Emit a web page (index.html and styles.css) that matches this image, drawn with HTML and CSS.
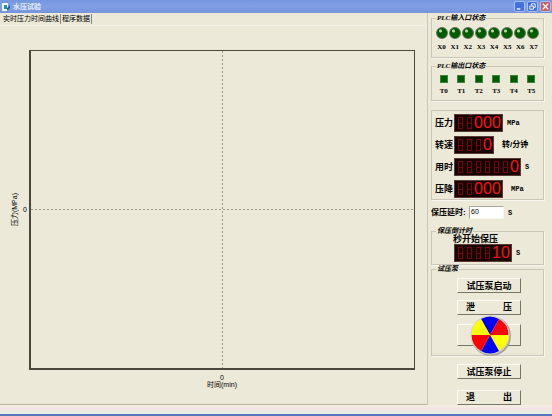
FILE: index.html
```html
<!DOCTYPE html>
<html lang="zh-CN">
  <head>
    <meta charset="UTF-8" />
    <meta name="viewport" content="width=device-width, initial-scale=1.0" />
    <title>水压试验</title>
    <link rel="stylesheet" href="styles.css">
  </head>
  <body>
    <header class="titlebar">
      <svg class="app-icon" viewBox="0 0 10 10">
        <rect x="1" y="1" width="6" height="8" rx="1" fill="#f4fbff" />
        <path d="M3 3h3v4H3z" fill="#238fae" />
        <path d="M6 6l3-3v3L6 9z" fill="#2a5f9e" />
      </svg>
      <h1>水压试验</h1>
      <button class="win-btn" type="button" aria-label="最小化">
        <svg viewBox="0 0 10 10"><path d="M2 7h4v1.500H2z" fill="#fff" /></svg>
      </button>
      <button class="win-btn" type="button" aria-label="还原">
        <svg viewBox="0 0 10 10" fill="none" stroke="#fff">
          <path d="M4 4V2h4v4H6.500M2 4.500h4V8H2z" />
        </svg>
      </button>
      <button class="win-btn win-btn--close" type="button" aria-label="关闭">
        <svg viewBox="0 0 10 10" stroke="#fff" stroke-width="1.500">
          <path d="M2 2l6 6M8 2L2 8" />
        </svg>
      </button>
    </header>

    <main class="content">
      <section class="left">
        <nav class="tabs">
          <button class="tab" type="button">实时压力时间曲线</button>
          <button class="tab" type="button">程序数据</button>
        </nav>
        <div class="tab-page">
          <div class="y-title">压力(MPa)</div>
          <div class="y-tick">0</div>
          <div class="plot"></div>
          <div class="x-axis">
            <div>0</div>
            <div>时间(min)</div>
          </div>
        </div>
      </section>

      <aside class="right">
        <fieldset class="group">
          <legend>PLC输入口状态</legend>
          <ul class="lamps">
            <li><i class="lamp"></i>X0</li>
            <li><i class="lamp"></i>X1</li>
            <li><i class="lamp"></i>X2</li>
            <li><i class="lamp"></i>X3</li>
            <li><i class="lamp"></i>X4</li>
            <li><i class="lamp"></i>X5</li>
            <li><i class="lamp"></i>X6</li>
            <li><i class="lamp"></i>X7</li>
          </ul>
        </fieldset>

        <fieldset class="group group--output">
          <legend>PLC输出口状态</legend>
          <ul class="lamps">
            <li><i class="lamp lamp--square"></i>T0</li>
            <li><i class="lamp lamp--square"></i>T1</li>
            <li><i class="lamp lamp--square"></i>T2</li>
            <li><i class="lamp lamp--square"></i>T3</li>
            <li><i class="lamp lamp--square"></i>T4</li>
            <li><i class="lamp lamp--square"></i>T5</li>
          </ul>
        </fieldset>

        <div class="group group--values">
          <div class="value">
            <span class="label">压力</span>
            <span class="led" data-digits="5">000</span>
            <span class="unit">MPa</span>
          </div>
          <div class="value">
            <span class="label">转速</span>
            <span class="led" data-digits="4">0</span>
            <span class="unit unit--cn">转/分钟</span>
          </div>
          <div class="value">
            <span class="label">用时</span>
            <span class="led" data-digits="7">0</span>
            <span class="unit">S</span>
          </div>
          <div class="value">
            <span class="label">压降</span>
            <span class="led" data-digits="5">000</span>
            <span class="unit unit--far">MPa</span>
          </div>
        </div>

        <div class="delay">
          <label for="delay">保压延时:</label>
          <input id="delay" type="text" value="60" />
          <span class="unit">S</span>
        </div>

        <fieldset class="group group--countdown">
          <legend>保压倒计时</legend>
          <div class="countdown-title">秒开始保压</div>
          <div class="value">
            <span class="led" data-digits="6">10</span>
            <span class="unit">S</span>
          </div>
        </fieldset>

        <fieldset class="group group--pump">
          <legend>试压泵</legend>
          <button class="btn" type="button">试压泵启动</button>
          <button class="btn btn--wide" type="button"><span>泄</span><span>压</span></button>
          <div class="fan">
            <button class="btn btn--blank" type="button" aria-label="泵"></button>
            <svg class="wheel" viewBox="-20 -20 42 42">
              <circle cx="1" cy="1" r="20" fill="#aaa69d" />
              <circle r="19.500" fill="#d8d3c7" />
              <path d="M0 0L-9 -16A18.400 18.400 0 0 1 9 -16z" fill="#0000f0" />
              <path d="M0 0L9 -16A18.400 18.400 0 0 1 18.400 0z" fill="#f00" />
              <path d="M0 0H18.400A18.400 18.400 0 0 1 9 16z" fill="#ff0" />
              <path d="M0 0L9 16A18.400 18.400 0 0 1 -9 16z" fill="#0000f0" />
              <path d="M0 0L-9 16A18.400 18.400 0 0 1 -18.400 0z" fill="#f00" />
              <path d="M0 0H-18.400A18.400 18.400 0 0 1 -9 -16z" fill="#ff0" />
            </svg>
          </div>
        </fieldset>

        <div class="actions">
          <button class="btn" type="button">试压泵停止</button>
          <button class="btn btn--wide" type="button"><span>退</span><span>出</span></button>
        </div>
      </aside>
    </main>
    <footer class="statusbar"></footer>

    <script>
      /* unlit cells in front of each value */
      document.querySelectorAll(".led").forEach((led) => {
        const value = led.textContent;
        const count = Number(led.dataset.digits);
        led.textContent = "";
        for (let i = 0; i < count; i++) {
          const cell = document.createElement("span");
          const digit = value[i - count + value.length];
          cell.className = digit ? "digit digit--on" : "digit";
          cell.textContent = digit || "";
          led.appendChild(cell);
        }
      });
    </script>
  </body>
</html>
```
FILE: styles.css
```css
* {
  box-sizing: border-box;
}

body {
  display: flex;
  flex-direction: column;
  min-height: 100vh;
  margin: 0;
  background: #ece9d8;
  color: #000;
  font-family: "Liberation Sans", "Noto Sans CJK SC", sans-serif;
  font-size: 7px;
  line-height: 10px;
}

button {
  font: inherit;
  color: inherit;
}

/* title bar */
.titlebar {
  display: flex;
  align-items: center;
  gap: 2px;
  height: 13px;
  padding: 0 1px;
  background: linear-gradient(#7397df, #829fe5 50%, #7594dc);
}
.titlebar h1 {
  flex: 1;
  margin: 0;
  color: #e4ebfa;
  font-size: 7px;
}
.app-icon {
  width: 10px;
  height: 10px;
}
.win-btn {
  width: 11px;
  height: 11px;
  border: 1px solid #a9c0f4;
  border-radius: 2px;
  padding: 0;
  background: #4470dc;
}
.win-btn svg {
  display: block;
}
.win-btn--close {
  background: #c35f62;
}

.content {
  flex: 1;
  display: flex;
}

/* chart */
.left {
  flex: 1;
  display: flex;
  flex-direction: column;
  border-right: 1px solid #c9c6b8;
}
.tabs {
  display: flex;
  height: 12px;
}
.tab {
  border: none;
  border-right: 1px solid #888579;
  padding: 0 1px;
  margin: 1px 0;
  background: none;
  white-space: nowrap;
}
.tab:first-child {
  padding-left: 3px;
}
.tab-page {
  flex: 1;
  display: grid;
  grid-template-columns: 12px 8px 1fr;
  grid-template-rows: 1fr 34px;
  padding: 24px 12px 0 9px;
  border-top: 1px solid #f3f1e6;
  border-bottom: 1px solid #b5b2a3;
}
.y-title {
  align-self: center;
  justify-self: center;
  writing-mode: vertical-rl;
  text-orientation: sideways;
  transform: rotate(180deg);
}
.y-tick {
  align-self: center;
  text-align: center;
}
.plot {
  border: 1px solid #4b473a;
  border-left-width: 2px;
  border-bottom-width: 2px;
  background:
    repeating-linear-gradient(90deg, #9d9a8d 0 2px, transparent 2px 4px) 0 50% / 100% 1px no-repeat,
    repeating-linear-gradient(#9d9a8d 0 2px, transparent 2px 4px) 50% 0 / 1px 100% no-repeat;
}
.x-axis {
  grid-column: 3;
  padding-top: 4px;
  text-align: center;
  line-height: 7px;
}

/* control column */
.right {
  display: flex;
  flex-direction: column;
  width: 124px;
  padding: 1px 8px 0 3px;
}
.group {
  min-width: 0;
  margin: 0;
  border: 1px solid #c9c6b8;
  padding: 0;
  box-shadow: 1px 1px 0 #f8f7ef;
}
.group legend {
  margin-left: 4px;
  padding: 0 1px;
  font-family: "Liberation Serif", "Noto Sans CJK SC", serif;
  font-size: 7px;
  font-style: italic;
  font-weight: bold;
  line-height: 8px;
}
.lamps {
  display: flex;
  height: 35px;
  margin: 0;
  padding: 5px 3px 0;
  list-style: none;
  font-family: "Liberation Serif", serif;
  font-weight: bold;
}
.lamps li {
  flex: 1;
  display: flex;
  flex-direction: column;
  align-items: center;
  gap: 3px;
}
.lamp {
  width: 12px;
  height: 12px;
  border: 1px solid #5f7557;
  border-radius: 50%;
  background: radial-gradient(circle at 35% 30%, #b8d9ae 0 1px, #005b00 2px);
}
.group--output {
  margin-top: 4px;
}
.group--output .lamps {
  height: 30px;
}
.lamp--square {
  width: 8px;
  height: 8px;
  border-color: #3f8338;
  border-radius: 0;
  background: #005b00;
}

.group--values {
  display: flex;
  flex-direction: column;
  gap: 4px;
  margin-top: 9px;
  padding: 3px 0 1px 3px;
}
.value {
  display: flex;
  align-items: center;
}
.label {
  width: 19px;
  font-size: 9px;
  font-weight: bold;
}
.led {
  display: flex;
  height: 18px;
  border: 1px solid #5a3a32;
  padding: 0 1px;
  background: #180000;
}
.digit {
  width: 9px;
  color: #f01818;
  font-family: "Liberation Sans", sans-serif;
  font-size: 16px;
  line-height: 16px;
  text-align: center;
}
.digit:not(.digit--on) {
  border: 2px solid #180000;
  background:
    linear-gradient(#6c0a0a, #6c0a0a) 0 50% / 100% 1px no-repeat,
    linear-gradient(#6c0a0a, #6c0a0a) 0 0 / 100% 1px no-repeat,
    linear-gradient(#6c0a0a, #6c0a0a) 0 100% / 100% 1px no-repeat,
    linear-gradient(#6c0a0a, #6c0a0a) 0 0 / 1px 100% no-repeat,
    linear-gradient(#6c0a0a, #6c0a0a) 100% 0 / 1px 100% no-repeat;
}
.unit {
  margin-left: 4px;
  font-family: "Liberation Mono", monospace;
  font-size: 7px;
  font-weight: bold;
}
.unit--cn {
  margin-left: 8px;
  font-family: "Liberation Sans", "Noto Sans CJK SC", sans-serif;
  font-size: 8px;
}
.unit--far {
  margin-left: 8px;
}

.delay {
  display: flex;
  align-items: center;
  margin-top: 6px;
  font-size: 8px;
  font-weight: bold;
}
.delay label {
  width: 38px;
  white-space: nowrap;
}
.delay input {
  width: 35px;
  height: 13px;
  border: 1px solid #aaa79a;
  border-right-color: #f8f7ef;
  border-bottom-color: #f8f7ef;
  padding: 0 1px 3px;
  background: #fff;
  font-family: "Liberation Sans", sans-serif;
  font-size: 7px;
}

.group--countdown {
  margin-top: 8px;
  padding-bottom: 2px;
}
.countdown-title {
  padding-left: 21px;
  font-size: 9px;
  font-weight: bold;
  line-height: 9px;
}
.group--countdown .value {
  padding-left: 22px;
}

/* pump */
.group--pump {
  height: 91px;
  padding-top: 5px;
}
.btn {
  display: block;
  width: 64px;
  height: 15px;
  border: 1px solid #fbfaf4;
  border-right-color: #77746a;
  border-bottom-color: #77746a;
  padding: 0 8px;
  background: #ece9d8;
  font-size: 9px;
  font-weight: bold;
  line-height: 12px;
  white-space: nowrap;
}
.group--pump .btn {
  margin: 0 0 7px 25px;
}
.btn--wide {
  display: flex;
  justify-content: space-between;
}
.fan {
  position: relative;
}
.group--pump .btn--blank {
  height: 22px;
  margin-top: 9px;
}
.wheel {
  position: absolute;
  top: -9px;
  left: 38px;
  width: 42px;
  height: 42px;
}
.actions {
  display: flex;
  flex-direction: column;
  gap: 11px;
  margin-top: 8px;
  padding-left: 26px;
}

.statusbar {
  height: 11px;
  border-bottom: 2px solid #5875bf;
  background: linear-gradient(#f3f0e3, #f1e4e2 50%, #e4efdf);
}
```
